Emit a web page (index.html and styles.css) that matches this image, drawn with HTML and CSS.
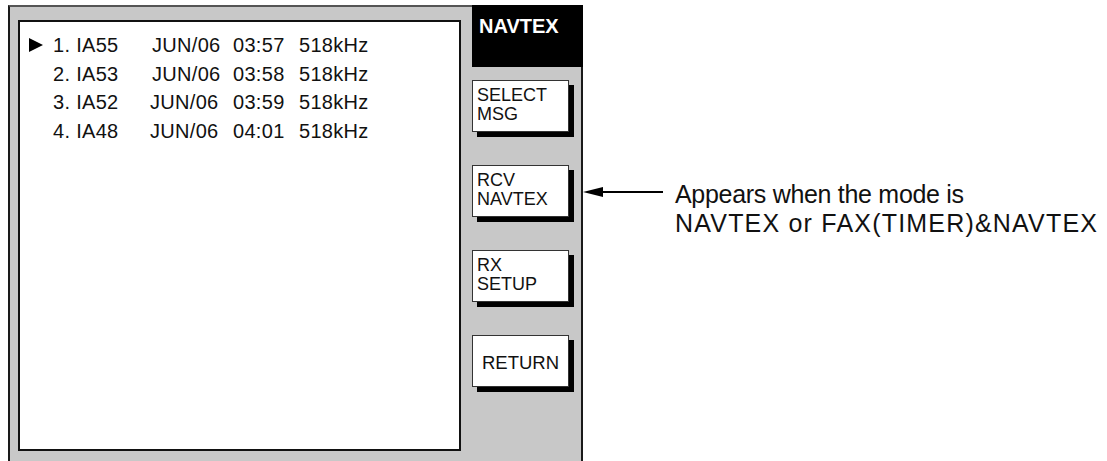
FILE: index.html
```html
<!DOCTYPE html>
<html>
  <head>
    <meta charset="utf-8">
    <title>NAVTEX</title>
    <link rel="stylesheet" href="styles.css">
  </head>
  <body>
    <div class="stage">
      <div class="frame">
        <div class="msglist">
          <div class="row">
            <span class="mark"><svg width="14" height="14" viewBox="0 0 14 14"><polygon points="0,0 14,7 0,14" fill="#000"/></svg></span>
            <span class="no">1. IA55</span><span class="date">JUN/06</span><span class="time">03:57</span><span class="freq">518kHz</span>
          </div>
          <div class="row">
            <span class="mark"></span>
            <span class="no">2. IA53</span><span class="date">JUN/06</span><span class="time">03:58</span><span class="freq">518kHz</span>
          </div>
          <div class="row">
            <span class="mark"></span>
            <span class="no">3. IA52</span><span class="date wide">JUN/06</span><span class="time">03:59</span><span class="freq">518kHz</span>
          </div>
          <div class="row">
            <span class="mark"></span>
            <span class="no">4. IA48</span><span class="date wide">JUN/06</span><span class="time">04:01</span><span class="freq">518kHz</span>
          </div>
        </div>
        <div class="keys">
          <div class="title">NAVTEX</div>
          <div class="key">SELECT<br>MSG</div>
          <div class="key">RCV<br>NAVTEX</div>
          <div class="key">RX<br>SETUP</div>
          <div class="key center">RETURN</div>
        </div>
      </div>
      <div class="callout">
        <svg class="arrow" width="82" height="16" viewBox="0 0 82 16"><polygon points="0,8 20,3 20,13" fill="#000"/><line x1="16" y1="8" x2="80" y2="8" stroke="#000" stroke-width="2"/></svg>
        <div class="note">
          <div class="lower">Appears when the mode is</div>
          <div class="caps">NAVTEX or FAX(TIMER)&amp;NAVTEX</div>
        </div>
      </div>
    </div>
  </body>
</html>
```

FILE: styles.css
```css
html, body {
  margin: 0;
  padding: 0;
  background: #fff;
  overflow: hidden;
  height: 100%;
}
body {
  font-family: "Liberation Sans", Arial, sans-serif;
  color: #111;
}
.stage {
  display: flex;
  align-items: flex-start;
  padding: 5px 0 0 8px;
}
.frame {
  box-sizing: border-box;
  width: 575px;
  height: 470px;
  display: flex;
  align-items: flex-start;
  background: #c8c8c8;
  border: 2px solid #1a1a1a;
  border-top-color: #555;
}
.msglist {
  box-sizing: border-box;
  width: 443px;
  height: 431px;
  margin: 13px 0 0 8px;
  padding-top: 9px;
  background: #fff;
  border: 2px solid #111;
  font-size: 20px;
  letter-spacing: 0.3px;
}
.row {
  display: flex;
  line-height: 28.7px;
  white-space: pre;
}
.mark {
  width: 24px;
  padding-left: 9px;
  display: flex;
  align-items: center;
}
.no {
  width: 99px;
}
.date {
  width: 81px;
}
.date.wide {
  width: 83px;
  margin-left: -2px;
}
.time {
  width: 66px;
}
.keys {
  width: 109px;
  margin-left: 11px;
  display: flex;
  flex-direction: column;
  gap: 33px;
}
.title {
  height: 62px;
  margin: -2px -2px -20px 0;
  padding: 10px 0 0 7px;
  box-sizing: border-box;
  background: #000;
  color: #fff;
  font-weight: bold;
  font-size: 20px;
  line-height: 22px;
}
.key {
  box-sizing: border-box;
  width: 97px;
  height: 52px;
  padding: 5px 0 0 4px;
  background: #fff;
  border: 1px solid #333;
  box-shadow: 5px 5px 0 #000;
  font-size: 18px;
  line-height: 19px;
}
.key.center {
  display: flex;
  align-items: center;
  justify-content: center;
  padding: 3px 0 0 0;
  font-size: 18.5px;
}
.callout {
  display: flex;
  align-items: flex-start;
  margin: 175px 0 0 0;
}
.arrow {
  margin-top: 4px;
}
.note {
  margin-left: 10px;
  font-size: 25px;
  line-height: 29px;
}
.lower {
  letter-spacing: -0.3px;
}
.caps {
  letter-spacing: 1.2px;
}
```
